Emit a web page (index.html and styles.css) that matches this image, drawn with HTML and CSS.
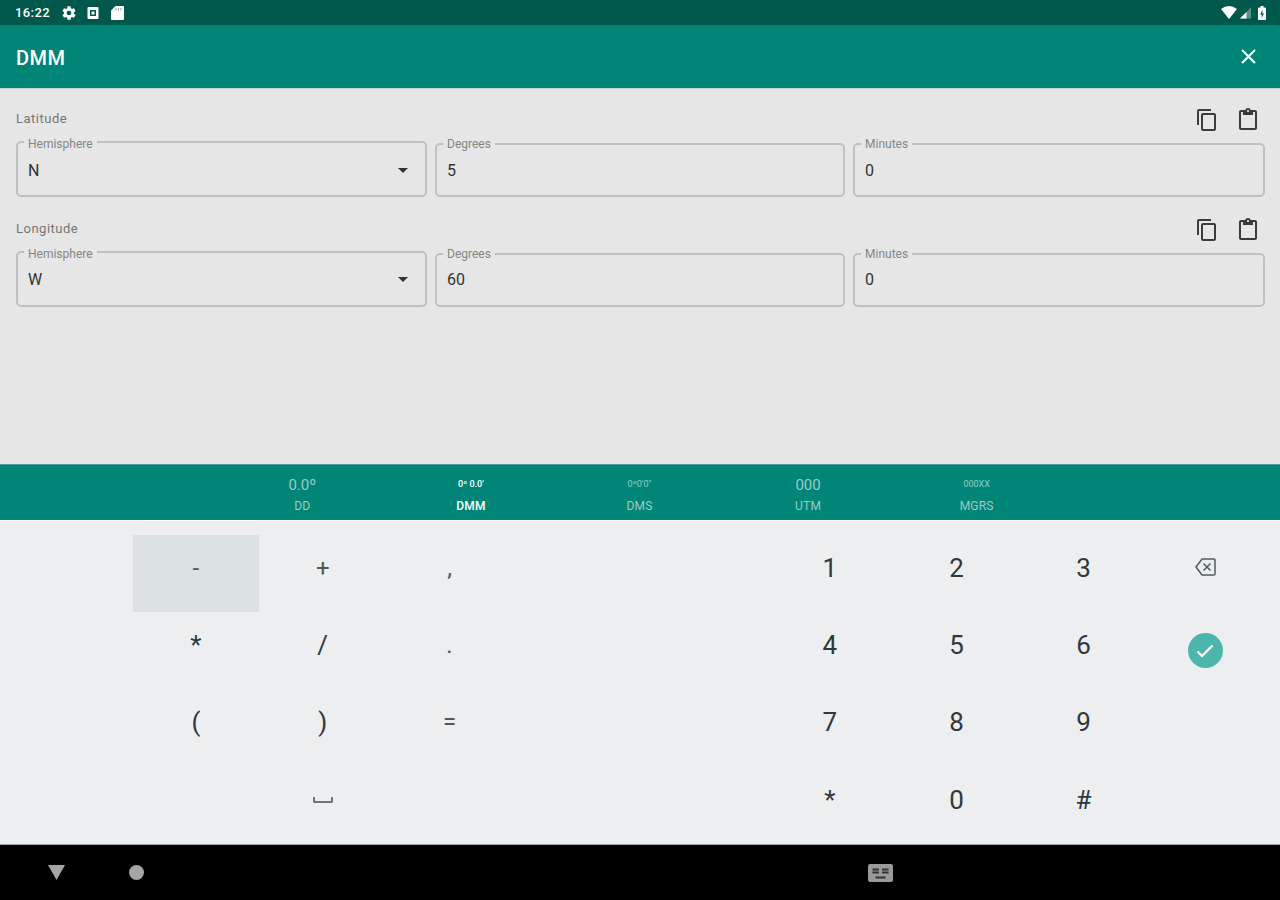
FILE: index.html
```html
<!DOCTYPE html>
<html lang="en">
<head>
	<meta charset="UTF-8">
	<title>DMM</title>
	<link rel="stylesheet" href="styles.css">
</head>
<body>
	<!-- icons used more than once -->
	<svg class="defs">
		<symbol id="copy" viewBox="0 0 24 24"><path d="M16 1H4c-1.1 0-2 .9-2 2v14h2V3h12V1zm3 4H8c-1.1 0-2 .9-2 2v14c0 1.1.9 2 2 2h11c1.1 0 2-.9 2-2V7c0-1.1-.9-2-2-2zm0 16H8V7h11v14z"/></symbol>
		<symbol id="paste" viewBox="0 0 24 24"><path d="M19 2h-4.18C14.4.84 13.3 0 12 0S9.6.84 9.18 2H5c-1.1 0-2 .9-2 2v16c0 1.1.9 2 2 2h14c1.1 0 2-.9 2-2V4c0-1.1-.9-2-2-2zm-7 0c.55 0 1 .45 1 1s-.45 1-1 1-1-.45-1-1 .45-1 1-1zm7 18H5V4h2v3h10V4h2v16z"/></symbol>
	</svg>

	<div class="status">
		<span class="time">16:22</span>
		<svg class="gear" viewBox="0 0 24 24"><path d="M19.4 13a7.500 7.500 0 0 0 0-2l2.100-1.650a.5.5 0 0 0 .12-.64l-2-3.460a.5.5 0 0 0-.61-.22l-2.490 1a7.300 7.300 0 0 0-1.690-.98l-.38-2.650A.49.490 0 0 0 14 2h-4a.49.490 0 0 0-.49.420l-.38 2.650c-.61.250-1.170.590-1.690.980l-2.490-1a.49.490 0 0 0-.61.220l-2 3.460a.49.490 0 0 0 .12.640L4.570 11a7.900 7.900 0 0 0 0 2l-2.110 1.650a.5.5 0 0 0-.12.640l2 3.460c.12.220.39.300.61.220l2.490-1c.52.400 1.080.730 1.690.980l.38 2.650c.03.240.24.420.49.420h4c.25 0 .46-.18.490-.42l.38-2.650a7.300 7.300 0 0 0 1.690-.98l2.490 1c.23.090.49 0 .61-.22l2-3.460a.5.5 0 0 0-.12-.64L19.400 13zM12 15.500a3.500 3.500 0 1 1 0-7 3.500 3.500 0 0 1 0 7z"/></svg>
		<svg class="app" viewBox="0 0 12 12"><path fill-rule="evenodd" d="M1.500 0h9q1 0 1 1v10q0 1-1 1h-9q-1 0-1-1V1q0-1 1-1zM3 3v6h6V3zM4.500 4.500h3v3h-3z"/></svg>
		<svg class="sd" viewBox="0 0 13 14"><path d="M4.500 0H12q1 0 1 1v12q0 1-1 1H1q-1 0-1-1V4.500z"/><path class="slots" d="M5 2v2.500M7.500 2v2.500M10 2v2.500"/></svg>
		<div class="right">
			<svg class="wifi" viewBox="0 0 16 13"><path d="M0 3Q8-3 16 3L8 13z"/></svg>
			<svg class="signal" viewBox="0 0 12 12"><path opacity=".35" d="M12 0v12H0z"/><path d="M7 5v7H0z"/></svg>
			<svg class="battery" viewBox="0 0 8 14"><path fill-rule="evenodd" d="M2.500 0h3v1.500H7q1 0 1 1V13q0 1-1 1H1q-1 0-1-1V2.500q0-1 1-1h1.500zM4.500 4L2.200 8.500h1.500V12L6 7.500H4.500z"/></svg>
		</div>
	</div>

	<div class="appbar">
		<h1>DMM</h1>
		<svg class="close" viewBox="0 0 14 14"><path d="M1 1l12 12M13 1L1 13"/></svg>
	</div>

	<div class="content">
		<div class="coord">
			<div class="head">
				<span>Latitude</span>
				<div class="tools">
					<svg><use href="#copy"/></svg>
					<svg><use href="#paste"/></svg>
				</div>
			</div>
			<div class="fields">
				<div class="field select"><label>Hemisphere</label><span>N</span><i class="arrow"></i></div>
				<div class="field"><label>Degrees</label><span>5</span></div>
				<div class="field"><label>Minutes</label><span>0</span></div>
			</div>
		</div>
		<div class="coord">
			<div class="head">
				<span>Longitude</span>
				<div class="tools">
					<svg><use href="#copy"/></svg>
					<svg><use href="#paste"/></svg>
				</div>
			</div>
			<div class="fields">
				<div class="field select"><label>Hemisphere</label><span>W</span><i class="arrow"></i></div>
				<div class="field"><label>Degrees</label><span>60</span></div>
				<div class="field"><label>Minutes</label><span>0</span></div>
			</div>
		</div>
	</div>

	<div class="tabs">
		<div class="tab"><b>0.0º</b><span>DD</span></div>
		<div class="tab active"><b class="small">0º 0.0'</b><span>DMM</span></div>
		<div class="tab"><b class="small">0º0'0"</b><span>DMS</span></div>
		<div class="tab"><b>000</b><span>UTM</span></div>
		<div class="tab"><b class="small">000XX</b><span>MGRS</span></div>
	</div>

	<div class="keyboard">
		<div class="key sym pressed">-</div>
		<div class="key sym">+</div>
		<div class="key sym">,</div>
		<div class="key num">1</div>
		<div class="key">2</div>
		<div class="key">3</div>
		<div class="key">
			<svg class="back" viewBox="0 0 21 18"><path d="M7 1h12q1 0 1 1v14q0 1-1 1H7L1 9zM8.500 5.500l7 7M15.500 5.500l-7 7"/></svg>
		</div>

		<div class="key">*</div>
		<div class="key">/</div>
		<div class="key sym">.</div>
		<div class="key num">4</div>
		<div class="key">5</div>
		<div class="key">6</div>
		<div class="key">
			<div class="enter"><svg viewBox="0 0 18 14"><path d="M1.500 7.500l4.500 4.500L16.500 1.500"/></svg></div>
		</div>

		<div class="key">(</div>
		<div class="key">)</div>
		<div class="key sym">=</div>
		<div class="key num">7</div>
		<div class="key">8</div>
		<div class="key">9</div>
		<div class="key"></div>

		<div class="key"></div>
		<div class="key"><i class="space"></i></div>
		<div class="key"></div>
		<div class="key num">*</div>
		<div class="key">0</div>
		<div class="key">#</div>
	</div>

	<div class="navbar">
		<svg class="down" viewBox="0 0 17 15"><path d="M0 0h17L8.500 15z"/></svg>
		<i class="home"></i>
		<svg class="ime" viewBox="0 0 25 18"><rect width="25" height="18" rx="2"/><path class="keys" d="M4.500 5.500h6.500M14 5.500h6.500M4.500 8.500h6.500M14 8.500h6.500M7.500 13.500h10"/></svg>
	</div>
</body>
</html>
```
FILE: styles.css
```css
*{
	box-sizing: border-box;
}
body{
	width: 1280px;
	height: 900px;
	margin: 0;
	overflow: hidden;
	display: flex;
	flex-direction: column;
	background-color: #e6e6e6;
	font-family: Roboto, sans-serif;
}
svg{
	display: block;
	flex: none;
}
.defs{
	display: none;
}
/*status bar*/
.status{
	height: 25px;
	padding: 0 14px 0 15px;
	display: flex;
	align-items: center;
	background-color: #00574b;
	color: #fff;
	fill: #fff;
}
.status .time{
	width: 46px;
	font-size: 13px;
	font-weight: 500;
	letter-spacing: 0.4px;
}
.status .gear{
	width: 16px;
	height: 16px;
	margin-right: 10px;
}
.status .app{
	width: 12px;
	height: 12px;
	margin-right: 12px;
}
.status .sd{
	width: 13px;
	height: 14px;
}
.status .slots{
	stroke: #7fa9a3;
	stroke-width: 1;
}
.status .right{
	margin-left: auto;
	display: flex;
	align-items: center;
}
.status .wifi{
	width: 16px;
	height: 13px;
	margin-right: 3px;
}
.status .signal{
	width: 11px;
	height: 12px;
	margin-right: 7px;
}
.status .battery{
	width: 8px;
	height: 14px;
}
/*app bar*/
.appbar{
	height: 63px;
	padding: 2px 24px 0 16px;
	display: flex;
	align-items: center;
	justify-content: space-between;
	background-color: #008577;
	color: #fff;
}
.appbar h1{
	margin: 0;
	font-size: 20px;
	font-weight: 500;
	line-height: 24px;
	letter-spacing: 0.5px;
}
.appbar .close{
	width: 15px;
	height: 15px;
	margin-bottom: 2px;
	fill: none;
	stroke: #fff;
	stroke-width: 2;
}
/*coordinates*/
.content{
	height: 376px;
	padding: 16px 16px 0;
	border-top: 1px solid #c4d6d4;
}
.coord{
	height: 109.500px;
}
.coord .head{
	height: 36px;
	padding: 2px 4px 0 0;
	display: flex;
	justify-content: space-between;
	font-size: 13px;
	line-height: 23px;
	letter-spacing: 0.5px;
	color: #757575;
}
.coord .tools{
	height: 26px;
	display: flex;
	align-items: center;
	gap: 17px;
}
.coord .tools svg{
	width: 24px;
	height: 24px;
	fill: #3c3c3c;
}
.fields{
	height: 56px;
	display: grid;
	grid-template-columns: 411px 410px 412px;
	gap: 8px;
	align-items: end;
}
.field{
	position: relative;
	height: 54px;
	padding: 0 10px;
	display: flex;
	align-items: center;
	justify-content: space-between;
	border: 2px solid #c0c0c0;
	border-radius: 5px;
	font-size: 16px;
	color: #333;
}
.field.select{
	height: 56px;
	padding-right: 17px;
}
.field label{
	position: absolute;
	left: 6px;
	top: -7px;
	padding: 0 4px;
	background-color: #e6e6e6;
	font-size: 12px;
	line-height: 13px;
	color: #858585;
}
.field.select label{
	top: -5px;
}
.field.select span,
.field.select .arrow{
	margin-top: 2px;
}
.field .arrow{
	border: 5px solid transparent;
	border-top-color: #333;
	border-bottom: 0;
}
/*format tabs*/
.tabs{
	height: 56px;
	padding: 0 219px 0 218px;
	display: flex;
	background-color: #008577;
	border-top: 1px solid #4a9f96;
	color: #9dccc6;
}
.tab{
	flex: 1;
	text-align: center;
}
.tab b{
	display: block;
	height: 22px;
	margin-top: 9px;
	font-size: 15px;
	font-weight: 400;
	line-height: 22px;
}
.tab .small{
	font-size: 9px;
	line-height: 21px;
}
.tab span{
	display: block;
	font-size: 12px;
	line-height: 20px;
	letter-spacing: 0.2px;
}
.tab.active{
	color: #fff;
}
.tab.active span,
.tab.active b{
	font-weight: 500;
}
/*keyboard*/
.keyboard{
	height: 325px;
	padding: 14px 0 0 132.500px;
	display: grid;
	grid-template-columns: repeat(3, 126.800px) 380.400px repeat(2, 126.800px) 117px;
	grid-template-rows: repeat(4, 77.400px);
	background-color: #eceef0;
	border-top: 1px solid #fff;
	border-bottom: 1px solid #a8a9aa;
}
.key{
	padding-bottom: 12px;
	display: flex;
	align-items: center;
	justify-content: center;
	font-size: 26px;
	color: #30383b;
}
/*small punctuation is a bit lighter than the digits*/
.key.sym{
	font-size: 24px;
	color: #50585b;
}
/*first digit column sits after an empty gap*/
.key.num{
	padding-left: 253.600px;
}
.key.pressed{
	background-color: #dce2e1;
}
.key .back{
	width: 21px;
	height: 18px;
	margin-bottom: 1px;
	fill: none;
	stroke: #4f5b60;
	stroke-width: 1.500;
}
.key .enter{
	width: 35px;
	height: 35px;
	margin-top: 11px;
	display: flex;
	align-items: center;
	justify-content: center;
	border-radius: 50%;
	background-color: #4db6ac;
}
.enter svg{
	width: 18px;
	height: 14px;
	fill: none;
	stroke: #fff;
	stroke-width: 2.200;
}
.key .space{
	width: 20px;
	height: 6px;
	border: 2px solid #6b7579;
	border-top: 0;
	border-radius: 0 0 2px 2px;
}
/*system navigation*/
.navbar{
	height: 55px;
	padding-left: 48px;
	display: flex;
	align-items: center;
	background-color: #000;
}
.navbar .down{
	width: 17px;
	height: 15px;
	fill: #a5a5a5;
}
.navbar .home{
	width: 15px;
	height: 15px;
	margin-left: 64px;
	border-radius: 50%;
	background-color: #a5a5a5;
}
.navbar .ime{
	width: 25px;
	height: 18px;
	margin-left: 724px;
	fill: #999;
}
.navbar .keys{
	stroke: #333;
	stroke-width: 2;
}
```
